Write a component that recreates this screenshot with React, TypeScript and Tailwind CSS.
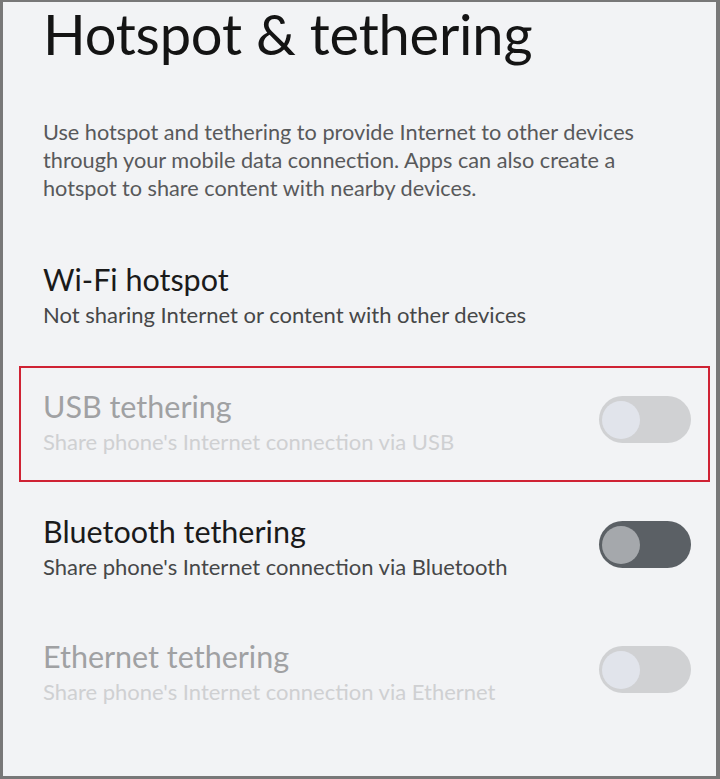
import React from "react";

function Toggle({ on, disabled }: { on?: boolean; disabled?: boolean }) {
  const track = disabled ? "bg-[#d0d1d3]" : "bg-[#5b6065]";
  const thumb = disabled ? "bg-[#e1e4eb]" : "bg-[#a5a8ac]";
  return (
    <div
      className={`mt-[7px] w-[92px] h-[47px] rounded-full ${track} flex items-center px-[3px] ${
        on ? "justify-end" : "justify-start"
      }`}
    >
      <div className={`w-[38px] h-[38px] rounded-full ${thumb}`} />
    </div>
  );
}

function Row({
  title,
  subtitle,
  disabled,
  toggle,
}: {
  title: string;
  subtitle: string;
  disabled?: boolean;
  toggle?: boolean;
}) {
  return (
    <div className="flex items-start justify-between">
      <div>
        <div
          className={`text-[30.5px] leading-[34px] ${
            disabled ? "text-[#a0a1a3]" : "text-[#1a1a1a]"
          }`}
        >
          {title}
        </div>
        <div
          className={`mt-[4px] text-[22px] leading-[30px] ${
            disabled ? "text-[#cfd0d2]" : "text-[#464748]"
          }`}
        >
          {subtitle}
        </div>
      </div>
      {toggle && <Toggle disabled={disabled} />}
    </div>
  );
}

export default function App() {
  return (
    <div
      className="w-[720px] h-[779px] bg-[#f2f3f5] border-t-2 border-l-[3px] border-r-4 border-b-[3px] border-[#787878] overflow-hidden"
      style={{ fontFamily: "Lato, 'Noto Sans', sans-serif" }}
    >
      <div className="pl-10 pr-[25px]">
        <h1 className="text-[56px] leading-[64px] text-[#141414] tracking-[-0.2px]">
          Hotspot &amp; tethering
        </h1>
        <p className="mt-[52px] text-[21.7px] leading-[28px] text-[#58595b]">
          Use hotspot and tethering to provide Internet to other devices
          <br />
          through your mobile data connection. Apps can also create a
          <br />
          hotspot to share content with nearby devices.
        </p>
        <div className="mt-[60px]">
          <Row
            title="Wi-Fi hotspot"
            subtitle="Not sharing Internet or content with other devices"
          />
        </div>
      </div>
      <div className="mt-[36px] ml-4 mr-[6px] h-[116px] border-2 border-[#cf2233] pl-[22px] pr-[17px] pt-[21px]">
        <Row
          title="USB tethering"
          subtitle="Share phone's Internet connection via USB"
          disabled
          toggle
        />
      </div>
      <div className="pl-10 pr-[25px] mt-[32px]">
        <Row
          title="Bluetooth tethering"
          subtitle="Share phone's Internet connection via Bluetooth"
          toggle
        />
        <div className="mt-[57px]">
          <Row
            title="Ethernet tethering"
            subtitle="Share phone's Internet connection via Ethernet"
            disabled
            toggle
          />
        </div>
      </div>
    </div>
  );
}
